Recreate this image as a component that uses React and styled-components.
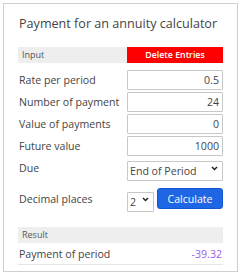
import React from 'react';
import styled, { createGlobalStyle } from 'styled-components';

const GlobalStyle = createGlobalStyle`
	body {
		margin: 0;
		background: #fff;
		font-family: 'Open Sans', 'Noto Sans', sans-serif;
		color: #444;
	}
`;

const Chevron = () => (
	<svg width='7' height='5' viewBox='0 0 7 5'>
		<path d='M1 1 L3.5 3.5 L6 1' fill='none' stroke='#222' strokeWidth='1.5' />
	</svg>
);

const App = () => {
	return (
		<>
			<GlobalStyle />
			<Card>
				<Title>Payment for an annuity calculator</Title>
				<HeaderBar>
					<HeaderLabel>Input</HeaderLabel>
					<DeleteButton>Delete Entries</DeleteButton>
				</HeaderBar>
				<Form>
					<Row>
						<Label>Rate per period</Label>
						<NumberInput defaultValue='0.5' />
					</Row>
					<Row>
						<Label>Number of payment</Label>
						<NumberInput defaultValue='24' />
					</Row>
					<Row>
						<Label>Value of payments</Label>
						<NumberInput defaultValue='0' />
					</Row>
					<Row>
						<Label>Future value</Label>
						<NumberInput defaultValue='1000' />
					</Row>
					<Row>
						<Label>Due</Label>
						<SelectWrap>
							<Select defaultValue='end'>
								<option value='end'>End of Period</option>
								<option value='begin'>Beginning of Period</option>
							</Select>
							<Arrow><Chevron /></Arrow>
						</SelectWrap>
					</Row>
					<ActionRow>
						<Label>Decimal places</Label>
						<Actions>
							<SelectWrap $narrow>
								<Select defaultValue='2'>
									<option>0</option>
									<option>1</option>
									<option>2</option>
									<option>3</option>
								</Select>
								<Arrow><Chevron /></Arrow>
							</SelectWrap>
							<CalcButton>Calculate</CalcButton>
						</Actions>
					</ActionRow>
				</Form>
				<ResultBar>Result</ResultBar>
				<ResultRow>
					<Label>Payment of period</Label>
					<ResultValue>-39.32</ResultValue>
				</ResultRow>
			</Card>
		</>
	);
};

var Card = styled.div`
	margin: 3px;
	width: 235px;
	height: 269px;
	box-sizing: border-box;
	border: 1px solid #cfcfcf;
	padding: 11px 14px 0 14px;
	display: flex;
	flex-direction: column;
`;

var Title = styled.h1`
	margin: 0 0 0 1px;
	font-size: 12.6px;
	font-weight: normal;
	line-height: 18px;
	color: #444;
	white-space: nowrap;
`;

var HeaderBar = styled.div`
	margin-top: 14px;
	display: grid;
	grid-template-columns: 109px 1fr;
	height: 16px;
	background: #eee;
`;

var HeaderLabel = styled.div`
	font-size: 9px;
	line-height: 16px;
	padding-left: 4px;
	color: #555;
`;

var DeleteButton = styled.button`
	border: none;
	margin: 0;
	padding: 0;
	background: #ff0000;
	color: #fff;
	font-family: inherit;
	font-size: 8.8px;
	font-weight: 600;
	line-height: 16px;
`;

var Form = styled.div`
	margin-top: 7px;
	display: flex;
	flex-direction: column;
	gap: 2px;
`;

var Row = styled.div`
	display: grid;
	grid-template-columns: 109px 1fr;
	align-items: center;
	height: 20px;
`;

var ActionRow = styled(Row)`
	margin-top: 8px;
	height: 21px;
`;

var Label = styled.span`
	font-size: 10.6px;
	color: #444;
	padding-left: 1px;
	white-space: nowrap;
`;

var NumberInput = styled.input`
	box-sizing: border-box;
	width: 100%;
	height: 20px;
	border: 1px solid #c8c8c8;
	border-radius: 1px;
	padding: 0 3px;
	text-align: right;
	font-family: inherit;
	font-size: 10.6px;
	color: #444;
	outline: none;
`;

var SelectWrap = styled.div`
	position: relative;
	width: ${(p) => (p.$narrow ? '27px' : '100%')};
	height: 20px;
`;

var Select = styled.select`
	appearance: none;
	box-sizing: border-box;
	width: 100%;
	height: 20px;
	border: 1px solid #c8c8c8;
	border-radius: 1px;
	padding: 0 0 0 2px;
	background: #fff;
	font-family: inherit;
	font-size: 10.6px;
	color: #444;
	outline: none;
`;

var Arrow = styled.span`
	position: absolute;
	right: 5px;
	top: 8px;
	display: flex;
	pointer-events: none;
`;

var Actions = styled.div`
	display: flex;
	align-items: center;
	gap: 3px;
`;

var CalcButton = styled.button`
	flex: 1;
	height: 21px;
	border: 1px solid #1456d0;
	border-radius: 3px;
	background: #1f66e5;
	color: #fff;
	font-family: inherit;
	font-size: 10.6px;
	padding: 0;
`;

var ResultBar = styled.div`
	margin-top: 18px;
	height: 16px;
	background: #eee;
	font-size: 9px;
	line-height: 16px;
	padding-left: 4px;
	color: #555;
`;

var ResultRow = styled.div`
	display: flex;
	justify-content: space-between;
	align-items: center;
	height: 21px;
	border-bottom: 1px solid #e6e6e6;
`;

var ResultValue = styled.span`
	font-size: 10.6px;
	color: #9a5cf0;
	padding-right: 1px;
`;

export default App;
